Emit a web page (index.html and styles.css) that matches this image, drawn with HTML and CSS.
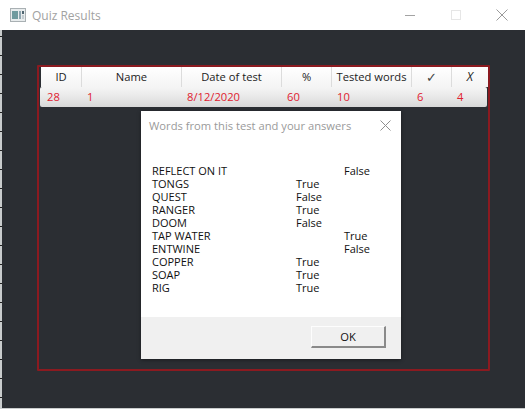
FILE: index.html
```html
<!DOCTYPE html>
<html lang="en">
<head>
    <meta charset="UTF-8">
    <meta name="viewport" content="width=device-width, initial-scale=1.0">
    <title>Quiz Results</title>
    <link rel="stylesheet" href="styles.css">
</head>
<body>
    <div class="window">
        <div class="titlebar">
            <svg class="app-icon" width="16" height="14" viewBox="0 0 16 14">
                <rect x="0.5" y="0.5" width="15" height="13" fill="#e8eced" stroke="#a9b0b3"/>
                <rect x="2" y="3" width="6" height="8" fill="#6f9a9e"/>
                <rect x="9" y="3" width="2" height="8" fill="#8fa6b0"/>
                <rect x="12" y="3" width="2" height="3" fill="#4f6570"/>
                <rect x="12" y="7" width="2" height="4" fill="#c3ccd0"/>
            </svg>
            <span class="window-title">Quiz Results</span>
            <div class="window-controls">
                <svg width="12" height="12" viewBox="0 0 12 12"><path d="M1 6.5H11" stroke="#a3a3a3"/></svg>
                <svg width="12" height="12" viewBox="0 0 12 12"><rect x="1.5" y="1.5" width="9" height="9" fill="none" stroke="#e6e6e6"/></svg>
                <svg width="12" height="12" viewBox="0 0 12 12"><path d="M0.5 0.5L11.5 11.5M11.5 0.5L0.5 11.5" stroke="#9a9a9a"/></svg>
            </div>
        </div>

        <div class="content">
            <div class="results-frame">
                <div class="row header-row">
                    <div class="cell c-id">ID</div>
                    <div class="cell c-name">Name</div>
                    <div class="cell c-date">Date of test</div>
                    <div class="cell c-pct">%</div>
                    <div class="cell c-words">Tested words</div>
                    <div class="cell c-ok">✓</div>
                    <div class="cell c-bad">X</div>
                </div>
                <div class="row data-row">
                    <div class="cell c-id">28</div>
                    <div class="cell c-name">1</div>
                    <div class="cell c-date">8/12/2020</div>
                    <div class="cell c-pct">60</div>
                    <div class="cell c-words">10</div>
                    <div class="cell c-ok">6</div>
                    <div class="cell c-bad">4</div>
                </div>
            </div>
        </div>

        <div class="dialog">
            <div class="dialog-head">
                <span>Words from this test and your answers</span>
                <svg width="11" height="11" viewBox="0 0 11 11"><path d="M0.5 0.5L10.5 10.5M10.5 0.5L0.5 10.5" stroke="#8f8f8f"/></svg>
            </div>
            <div class="word-list">
                <span>REFLECT ON IT</span><span></span><span>False</span>
                <span>TONGS</span><span>True</span><span></span>
                <span>QUEST</span><span>False</span><span></span>
                <span>RANGER</span><span>True</span><span></span>
                <span>DOOM</span><span>False</span><span></span>
                <span>TAP WATER</span><span></span><span>True</span>
                <span>ENTWINE</span><span></span><span>False</span>
                <span>COPPER</span><span>True</span><span></span>
                <span>SOAP</span><span>True</span><span></span>
                <span>RIG</span><span>True</span><span></span>
            </div>
            <div class="dialog-foot">
                <button class="ok-btn">OK</button>
            </div>
        </div>
    </div>
</body>
</html>
```

FILE: styles.css
```css
html, body {
    margin: 0;
    padding: 0;
}
body {
    width: 525px;
    height: 409px;
    overflow: hidden;
    background: linear-gradient(#c9cccd 18px, #222 18px) 0 -1px / 100% 19px;
    font-family: "Open Sans", "Noto Sans", sans-serif;
    font-size: 11.2px;
}
.window {
    position: relative;
    width: 523px;
    height: 408px;
    margin-left: 2px;
    background: #2b2e33;
}
.titlebar {
    height: 30px;
    margin-left: -2px;
    padding-left: 10px;
    background: white;
    display: flex;
    align-items: center;
    color: #a2a2a2;
    font-size: 12px;
}
.app-icon {
    margin-right: 6px;
}
.window-controls {
    margin-left: auto;
    margin-right: 17px;
    display: flex;
    gap: 34px;
}
.content {
    padding: 35px 0 0 35px;
}
.results-frame {
    width: 449px;
    height: 302px;
    border: 2px solid #8b1a20;
    border-radius: 1px;
}
.row {
    display: flex;
    height: 20px;
}
.header-row {
    margin-left: 2px;
    width: 447px;
    background: linear-gradient(#ffffff, #f4f4f4);
    color: #1c1c1c;
}
.header-row .cell {
    text-align: center;
    border-right: 1px solid #dcdcdc;
}
.header-row .cell:last-child {
    border-right: none;
}
.header-row .c-ok {
    font-size: 13px;
    color: #444;
}
.header-row .c-bad {
    font-style: italic;
    font-size: 12px;
}
.data-row {
    margin-left: 1px;
    width: 447px;
    border-radius: 2px;
    background: linear-gradient(#f5f5f5, #e8e8e8 50%, #d8d8d8);
    color: #e0202f;
}
.data-row .cell {
    padding-left: 6px;
}
.data-row .c-id {
    padding-left: 7px;
}
.cell {
    box-sizing: border-box;
    line-height: 20px;
    white-space: nowrap;
}
.c-id { width: 41px; }
.c-name { width: 100px; }
.c-date { width: 100px; }
.c-pct { width: 50px; }
.c-words { width: 80px; }
.c-ok { width: 40px; }
.c-bad { width: 36px; }
.dialog {
    position: absolute;
    left: 139px;
    top: 111px;
    width: 260px;
    height: 248px;
    background: white;
    display: flex;
    flex-direction: column;
    box-shadow: 0 1px 4px rgba(0,0,0,0.4);
}
.dialog-head {
    height: 29px;
    padding: 0 10px 0 8px;
    display: flex;
    align-items: center;
    justify-content: space-between;
    color: #9a9a9a;
}
.word-list {
    margin-top: 24px;
    padding-left: 11px;
    display: grid;
    grid-template-columns: 144px 48px 1fr;
    grid-auto-rows: 13px;
    line-height: 13px;
    font-size: 11px;
    color: #111;
}
.dialog-foot {
    margin-top: auto;
    height: 42px;
    box-sizing: border-box;
    padding: 9px 15px 0 0;
    background: #f0f0f0;
    display: flex;
    justify-content: flex-end;
    align-items: flex-start;
}
.ok-btn {
    width: 75px;
    height: 22px;
    padding: 0;
    background: #f0f0f0;
    border-style: solid;
    border-width: 1px 2px 2px 1px;
    border-color: #fdfdfd #8a8a8a #8a8a8a #fdfdfd;
    font-family: inherit;
    font-size: 11.2px;
    color: #111;
}
```
